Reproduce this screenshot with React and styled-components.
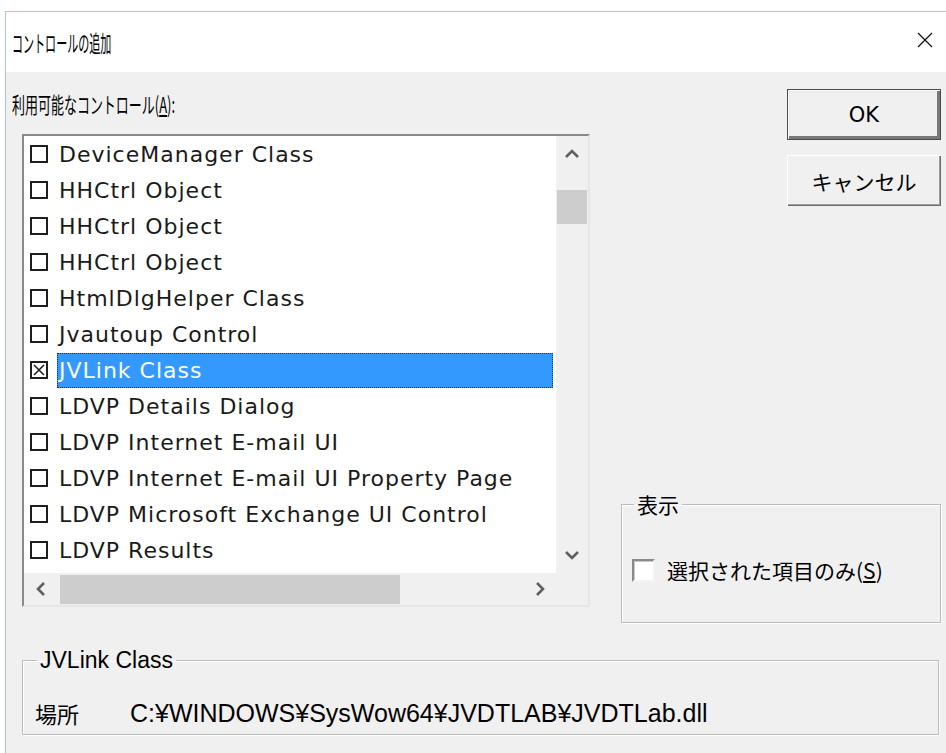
import React from 'react';
import styled, { createGlobalStyle } from 'styled-components';

const GlobalStyle = createGlobalStyle`
  html, body {
    margin: 0;
    padding: 0;
    background: #ffffff;
    overflow: hidden;
  }
  body {
    font-family: "Noto Sans CJK JP", "DejaVu Sans", sans-serif;
    color: #000;
  }
`;

const controls = [
  { name: 'DeviceManager Class' },
  { name: 'HHCtrl Object' },
  { name: 'HHCtrl Object' },
  { name: 'HHCtrl Object' },
  { name: 'HtmlDlgHelper Class' },
  { name: 'Jvautoup Control' },
  { name: 'JVLink Class', checked: true, selected: true },
  { name: 'LDVP Details Dialog' },
  { name: 'LDVP Internet E-mail UI' },
  { name: 'LDVP Internet E-mail UI Property Page' },
  { name: 'LDVP Microsoft Exchange UI Control' },
  { name: 'LDVP Results' },
];

function Chevron({ dir }) {
  const paths = {
    up: 'M1 8 L7 2 L13 8',
    down: 'M1 2 L7 8 L13 2',
    left: 'M8 1 L2 7 L8 13',
    right: 'M2 1 L8 7 L2 13',
  };
  const vertical = dir === 'up' || dir === 'down';
  return (
    <svg width={vertical ? 14 : 10} height={vertical ? 10 : 14} viewBox={vertical ? '0 0 14 10' : '0 0 10 14'}>
      <path d={paths[dir]} fill="none" stroke="#5f5f5f" strokeWidth="2.6" />
    </svg>
  );
}

export default function App() {
  return (
    <>
      <GlobalStyle />
      <Window>
        <TitleBar>
          <Title>コントロールの追加</Title>
          <CloseIcon viewBox="0 0 16 16">
            <path d="M1 1 L15 15 M15 1 L1 15" stroke="#111" strokeWidth="1.3" />
          </CloseIcon>
        </TitleBar>

        <Body>
          <TopRow>
            <LeftCol>
              <CondensedLabel>
                利用可能なコントロール(<u>A</u>):
              </CondensedLabel>
              <ListBox>
                <Items>
                  {controls.map((c, i) => (
                    <Row key={i}>
                      <CheckGlyph>
                        {c.checked && (
                          <svg width="12" height="12" viewBox="0 0 12 12">
                            <path d="M1 1 L11 11 M11 1 L1 11" stroke="#202020" strokeWidth="1.6" />
                          </svg>
                        )}
                      </CheckGlyph>
                      <ItemText $selected={c.selected}>{c.name}</ItemText>
                    </Row>
                  ))}
                </Items>
                <VScroll>
                  <ArrowBox $h={36}><Chevron dir="up" /></ArrowBox>
                  <VTrack>
                    <VThumb />
                  </VTrack>
                  <ArrowBox $h={36}><Chevron dir="down" /></ArrowBox>
                </VScroll>
                <HScroll>
                  <ArrowBox $w={33}><Chevron dir="left" /></ArrowBox>
                  <HTrack>
                    <HThumb />
                  </HTrack>
                  <ArrowBox $w={33}><Chevron dir="right" /></ArrowBox>
                </HScroll>
                <Corner />
              </ListBox>
            </LeftCol>

            <RightCol>
              <Button $default>OK</Button>
              <Button>キャンセル</Button>
              <DisplayGroup>
                <Legend>表示</Legend>
                <CheckRow>
                  <SunkenBox />
                  <span>選択された項目のみ(<u>S</u>)</span>
                </CheckRow>
              </DisplayGroup>
            </RightCol>
          </TopRow>

          <InfoGroup>
            <Legend $latin>JVLink Class</Legend>
            <InfoRow>
              <InfoKey>場所</InfoKey>
              <InfoPath>C:¥WINDOWS¥SysWow64¥JVDTLAB¥JVDTLab.dll</InfoPath>
            </InfoRow>
          </InfoGroup>
        </Body>
      </Window>
    </>
  );
}

const Window = styled.div`
  margin: 11px 0 0 5px;
  height: 742px;
  border-top: 1px solid #a3c6ea;
  border-left: 1px solid #a3c6ea;
  background: #f0f0f0;
  display: flex;
  flex-direction: column;
`;

const TitleBar = styled.div`
  height: 60px;
  background: #ffffff;
  display: flex;
  align-items: center;
  justify-content: space-between;
  padding: 0 13px 0 6px;
`;

const Title = styled.div`
  font-size: 23px;
  line-height: 24px;
  transform: scaleX(0.48);
  transform-origin: left center;
  white-space: nowrap;
`;

const CloseIcon = styled.svg`
  width: 16px;
  height: 16px;
  margin-top: -4px;
`;

const Body = styled.div`
  flex: 1;
  display: flex;
  flex-direction: column;
  padding: 0 5px 0 6px;
`;

const TopRow = styled.div`
  height: 551px;
  display: flex;
  justify-content: space-between;
`;

const LeftCol = styled.div`
  display: flex;
  flex-direction: column;
`;

const CondensedLabel = styled.div`
  margin-top: 19px;
  font-size: 22px;
  line-height: 24px;
  transform: scaleX(0.59);
  transform-origin: left center;
  white-space: nowrap;
`;

const ListBox = styled.div`
  margin: 19px 0 0 10px;
  width: 568px;
  height: 473px;
  box-sizing: border-box;
  border-style: solid;
  border-width: 2px;
  border-color: #8a8a8a #e6e6e6 #e6e6e6 #8a8a8a;
  background: #ffffff;
  display: grid;
  grid-template-columns: 1fr 32px;
  grid-template-rows: 1fr 32px;
`;

const Items = styled.div`
  overflow: hidden;
  display: flex;
  flex-direction: column;
`;

const Row = styled.div`
  height: 36px;
  flex: 0 0 36px;
  display: flex;
  align-items: center;
  padding-left: 6px;
`;

const CheckGlyph = styled.span`
  width: 18px;
  height: 18px;
  box-sizing: border-box;
  border: 2px solid #1e1e1e;
  display: flex;
  align-items: center;
  justify-content: center;
  margin-right: 9px;
  flex: none;
`;

const ItemText = styled.span`
  width: 496px;
  height: 35px;
  box-sizing: border-box;
  padding-left: 2px;
  font-family: "DejaVu Sans", sans-serif;
  font-size: 22px;
  letter-spacing: 1px;
  line-height: 35px;
  white-space: nowrap;
  background: ${(p) => (p.$selected ? '#3399ff' : 'transparent')};
  color: ${(p) => (p.$selected ? '#ffffff' : '#1a1a1a')};
  outline: ${(p) => (p.$selected ? '1px dotted #2a2a2a' : 'none')};
  outline-offset: -1px;
`;

const VScroll = styled.div`
  background: #f0f0f0;
  display: flex;
  flex-direction: column;
`;

const HScroll = styled.div`
  background: #f0f0f0;
  display: flex;
`;

const Corner = styled.div`
  background: #f0f0f0;
`;

const ArrowBox = styled.div`
  flex: none;
  ${(p) => (p.$h ? `height: ${p.$h}px;` : '')}
  ${(p) => (p.$w ? `width: ${p.$w}px;` : '')}
  display: flex;
  align-items: center;
  justify-content: center;
`;

const VTrack = styled.div`
  flex: 1;
  display: flex;
  flex-direction: column;
  align-items: center;
`;

const VThumb = styled.div`
  margin-top: 18px;
  width: 30px;
  height: 34px;
  background: #cdcdcd;
`;

const HTrack = styled.div`
  flex: 1;
  display: flex;
  align-items: center;
`;

const HThumb = styled.div`
  margin-left: 3px;
  width: 340px;
  height: 29px;
  background: #cdcdcd;
`;

const RightCol = styled.div`
  width: 320px;
  padding-top: 17px;
  display: flex;
  flex-direction: column;
  align-items: flex-end;
  gap: 15px;
`;

const Button = styled.div`
  width: 154px;
  height: 51px;
  box-sizing: border-box;
  display: flex;
  align-items: center;
  justify-content: center;
  font-family: "DejaVu Sans", "Noto Sans CJK JP", sans-serif;
  font-size: 21px;
  background: #f0f0f0;
  border: ${(p) => (p.$default ? '1px solid #4a4a4a' : 'none')};
  box-shadow: ${(p) =>
    p.$default
      ? 'inset 1px 1px 0 #ffffff, inset -3px -3px 0 #777777, inset 2px 2px 0 #e8e8e8'
      : 'inset 1px 1px 0 #ffffff, inset -1px -1px 0 #6a6a6a, inset -2px -2px 0 #a0a0a0'};
`;

const Fieldset = styled.fieldset`
  margin: 0;
  min-width: 0;
  border: 1px solid #bcbcbc;
  box-shadow: inset 1px 1px 0 #ffffff, 1px 1px 0 #ffffff;
`;

const DisplayGroup = styled(Fieldset)`
  margin-top: auto;
  align-self: stretch;
  padding: 0 10px 40px 10px;
`;

const Legend = styled.legend`
  margin-left: 2px;
  padding: 0 3px;
  font-family: ${(p) => (p.$latin ? '"Liberation Sans", sans-serif' : '"Noto Sans CJK JP", sans-serif')};
  font-size: ${(p) => (p.$latin ? '23px' : '21px')};
  line-height: 24px;
`;

const CheckRow = styled.div`
  margin-top: 42px;
  display: flex;
  align-items: center;
  gap: 12px;
  font-size: 21px;
  line-height: 24px;
`;

const SunkenBox = styled.span`
  width: 23px;
  height: 23px;
  box-sizing: border-box;
  background: #ffffff;
  border-style: solid;
  border-width: 2px;
  border-color: #8a8a8a #f4f4f4 #f4f4f4 #8a8a8a;
  box-shadow: inset 1px 1px 0 #c8c8c8;
`;

const InfoGroup = styled(Fieldset)`
  margin: 25px 2px 0 10px;
  padding: 0 10px 9px 12px;
`;

const InfoRow = styled.div`
  margin-top: 29px;
  display: flex;
  align-items: center;
  line-height: 24px;
`;

const InfoKey = styled.span`
  width: 95px;
  font-size: 22px;
`;

const InfoPath = styled.span`
  font-family: "Liberation Sans", sans-serif;
  font-size: 25px;
  white-space: nowrap;
`;
